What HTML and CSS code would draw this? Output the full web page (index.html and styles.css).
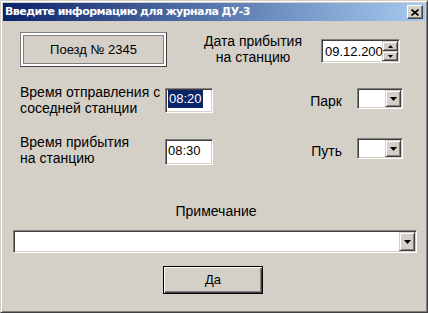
FILE: index.html
```html
<!DOCTYPE html>
<html lang="ru">
<head>
    <meta charset="UTF-8">
    <title>Журнал ДУ-3</title>
    <link rel="stylesheet" href="styles.css">
</head>
<body>
    <div class="window">
        <div class="titlebar">
            <span class="title">Введите информацию для журнала ДУ-3</span>
            <span class="close">
                <svg width="8" height="7" viewBox="0 0 8 7"><path d="M0.5 0.5 L7.5 6.5 M7.5 0.5 L0.5 6.5" stroke="#000" stroke-width="1.6"/></svg>
            </span>
        </div>

        <div class="content">
            <!-- поезд и дата -->
            <div class="row row-top">
                <div class="train">Поезд № 2345</div>
                <div class="label date-label">Дата прибытия<br>на станцию</div>
                <div class="field date">
                    <span class="value">09.12.2003</span>
                    <span class="spin">
                        <span class="spin-btn"><svg width="5" height="3" viewBox="0 0 5 3"><path d="M2.5 0 L5 3 L0 3 Z" fill="#000"/></svg></span>
                        <span class="spin-btn"><svg width="5" height="3" viewBox="0 0 5 3"><path d="M0 0 L5 0 L2.5 3 Z" fill="#000"/></svg></span>
                    </span>
                </div>
            </div>

            <!-- отправление -->
            <div class="row row-depart">
                <div class="label side-label">Время отправления с<br>соседней станции</div>
                <div class="field time depart"><span class="sel">08:20</span></div>
                <div class="label right-label park">Парк</div>
                <div class="field combo small park-combo">
                    <span class="drop"><svg width="7" height="4" viewBox="0 0 7 4"><path d="M0 0 L7 0 L3.5 4 Z" fill="#000"/></svg></span>
                </div>
            </div>

            <!-- прибытие -->
            <div class="row row-arrive">
                <div class="label side-label">Время прибытия<br>на станцию</div>
                <div class="field time arrive"><span class="text">08:30</span></div>
                <div class="label right-label track">Путь</div>
                <div class="field combo small track-combo">
                    <span class="drop"><svg width="7" height="4" viewBox="0 0 7 4"><path d="M0 0 L7 0 L3.5 4 Z" fill="#000"/></svg></span>
                </div>
            </div>

            <div class="label note-label">Примечание</div>
            <div class="field combo wide">
                <span class="drop"><svg width="7" height="4" viewBox="0 0 7 4"><path d="M0 0 L7 0 L3.5 4 Z" fill="#000"/></svg></span>
            </div>

            <div class="ok">Да</div>
        </div>
    </div>
</body>
</html>
```

FILE: styles.css
```css
body {
    margin: 0;
    background-color: #d4d0c8;
    font-family: "Liberation Sans", Arial, sans-serif;
    font-size: 13px;
    line-height: 16px;
    color: #000;
}
.window {
    width: 428px;
    height: 313px;
    box-sizing: border-box;
    border: 1px solid;
    border-color: #d4d0c8 #404040 #404040 #d4d0c8;
    box-shadow: inset 1px 1px #fff, inset -1px -1px #808080;
    padding: 2px;
    overflow: hidden;
}
.titlebar {
    height: 18px;
    display: flex;
    align-items: center;
    justify-content: space-between;
    padding: 0 2px;
    background: linear-gradient(to right, #0a246a, #a6caf0);
}
.title {
    color: #fff;
    font-family: "DejaVu Sans", Verdana, sans-serif;
    font-weight: bold;
    font-size: 11px;
    letter-spacing: -0.55px;
    white-space: nowrap;
}
.close {
    width: 16px;
    height: 14px;
    box-sizing: border-box;
    display: flex;
    align-items: center;
    justify-content: center;
    background-color: #d4d0c8;
    border: 1px solid;
    border-color: #fff #404040 #404040 #fff;
    box-shadow: inset -1px -1px #808080;
}
.content {
    padding: 11px 8px 0 10px;
}
.row {
    display: flex;
    align-items: flex-start;
    margin-left: 7px;
}
.row-top {
    height: 35px;
}
.row-depart {
    margin-top: 17px;
    height: 50px;
}
.row-arrive {
    height: 69px;
}

/* кнопки */
.train {
    width: 147px;
    height: 35px;
    box-sizing: border-box;
    border: 1px solid;
    border-color: #808080 #404040 #404040 #808080;
    box-shadow: inset 0 0 0 2px #fff, inset 0 0 0 3px #808080;
    display: flex;
    align-items: center;
    justify-content: center;
}
.ok {
    width: 100px;
    height: 28px;
    box-sizing: border-box;
    margin: 13px 0 0 150px;
    border: 1px solid #000;
    box-shadow: inset 1px 1px #fff, inset -1px -1px #404040, inset -2px -2px #808080;
    display: flex;
    align-items: center;
    justify-content: center;
}

/* подписи */
.label {
    font-size: 14px;
}
.date-label {
    width: 116px;
    margin: 1px 0 0 28px;
    text-align: center;
}
.side-label {
    width: 145px;
    white-space: nowrap;
}
.right-label {
    width: 129px;
    text-align: right;
    margin-top: 9px;
}
.note-label {
    text-align: center;
    margin-left: 2px;
}

/* поля ввода */
.field {
    box-sizing: border-box;
    background-color: #fff;
    border: 1px solid;
    border-color: #808080 #fff #fff #808080;
    box-shadow: inset 1px 1px #404040, inset -1px -1px #d4d0c8;
    padding: 1px;
    display: flex;
}
.date {
    width: 79px;
    height: 24px;
    margin: 7px 0 0 10px;
}
.date .value {
    flex: 1;
    overflow: hidden;
    white-space: nowrap;
    padding: 3px 0 0 2px;
    line-height: 16px;
}
.spin {
    width: 16px;
    display: flex;
    flex-direction: column;
}
.spin-btn {
    flex: 1;
    display: flex;
    align-items: center;
    justify-content: center;
    background-color: #d4d0c8;
    box-sizing: border-box;
    border: 1px solid;
    border-color: #d4d0c8 #404040 #404040 #d4d0c8;
    box-shadow: inset 1px 1px #fff, inset -1px -1px #808080;
}
.time {
    width: 48px;
    padding: 1px 1px 1px 2px;
    line-height: 18px;
}
.depart {
    height: 25px;
    margin-top: 4px;
}
.arrive {
    height: 26px;
    margin-top: 5px;
}
.arrive .text {
    padding-top: 1px;
}
.sel {
    background-color: #0a246a;
    color: #fff;
    padding: 0 1px;
    height: 18px;
}
.combo {
    justify-content: flex-end;
}
.small {
    width: 46px;
    height: 21px;
    margin: 4px 0 0 15px;
}
.wide {
    width: 404px;
    height: 23px;
    margin-top: 11px;
}
.drop {
    width: 16px;
    display: flex;
    align-items: center;
    justify-content: center;
    background-color: #d4d0c8;
    box-sizing: border-box;
    border: 1px solid;
    border-color: #d4d0c8 #404040 #404040 #d4d0c8;
    box-shadow: inset 1px 1px #fff, inset -1px -1px #808080;
}
```
